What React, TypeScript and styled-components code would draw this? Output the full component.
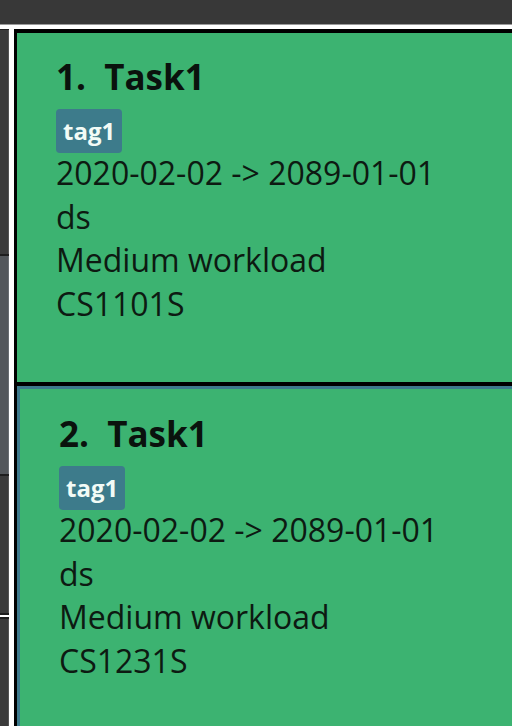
import React from "react";
import styled, { createGlobalStyle } from "styled-components";

const Global = createGlobalStyle`
  html, body { margin: 0; padding: 0; background: #ffffff; }
  body { font-family: "Open Sans", "Noto Sans", sans-serif; }
`;

const Page = styled.div`
  width: 512px;
  height: 726px;
  overflow: hidden;
  display: flex;
  flex-direction: column;
  background: #ffffff;
`;

const TopBar = styled.div`
  height: 24px;
  flex: none;
  background: #383838;
  border-bottom: 1px solid #9a9a9a;
`;

const Spacer = styled.div`
  height: 4px;
  flex: none;
  background: #ffffff;
`;

const Main = styled.div`
  flex: 1;
  display: flex;
  min-height: 0;
`;

const SideList = styled.div`
  width: 9px;
  flex: none;
  display: flex;
  flex-direction: column;
  background: #1e1e1e;
  gap: 2px;
  padding-top: 1px;
`;

const SideCell = styled.div<{ $h: number; $light?: boolean }>`
  height: ${(p) => p.$h}px;
  flex: none;
  box-sizing: border-box;
  background: ${(p) => (p.$light ? "#53575b" : "#3b3b3b")};
  border-right: 1px solid ${(p) => (p.$light ? "#6a6e72" : "#555555")};
`;

const SideBreak = styled.div`
  height: 2px;
  flex: none;
  background: #ffffff;
`;

const Divider = styled.div`
  width: 5px;
  flex: none;
  background: #ffffff;
`;

const TaskList = styled.div`
  flex: 1;
  display: flex;
  flex-direction: column;
  border-left: 3px solid #000000;
  background: #3cb371;
`;

const Card = styled.div<{ $selected?: boolean }>`
  flex: none;
  height: ${(p) => (p.$selected ? 400 : 353)}px;
  box-sizing: border-box;
  border-top: 4px solid #000000;
  background: #3cb371;
  ${(p) => (p.$selected ? "box-shadow: inset 3px 3px 0 #3d7a8c;" : "")}
  padding: ${(p) => (p.$selected ? "28px 0 0 42px" : "24px 0 0 39px")};
  display: flex;
  flex-direction: column;
  align-items: flex-start;
  color: #0d1a12;
`;

const Title = styled.div`
  font-family: "Open Sans", "Noto Sans", sans-serif;
  font-weight: 700;
  font-size: 35px;
  line-height: 40px;
  color: #0a120d;
  white-space: pre;
`;

const Tag = styled.span`
  margin-top: 12px;
  margin-bottom: -2px;
  background: #3d7b8b;
  color: #f2fbf6;
  font-weight: 700;
  font-size: 24px;
  line-height: 44px;
  height: 44px;
  padding: 0 7px;
  border-radius: 4px;
`;

const Line = styled.div`
  font-size: 32px;
  line-height: 43.5px;
  color: #0d1a12;
  white-space: pre;
`;

type Task = { idx: number; name: string; tag: string; range: string; desc: string; workload: string; module: string };

const tasks: Task[] = [
  { idx: 1, name: "Task1", tag: "tag1", range: "2020-02-02 -> 2089-01-01", desc: "ds", workload: "Medium workload", module: "CS1101S" },
  { idx: 2, name: "Task1", tag: "tag1", range: "2020-02-02 -> 2089-01-01", desc: "ds", workload: "Medium workload", module: "CS1231S" },
];

export default function App() {
  return (
    <Page>
      <Global />
      <TopBar />
      <Spacer />
      <Main>
        <SideList>
          <SideCell $h={224} />
          <SideCell $h={218} $light />
          <SideCell $h={137} />
          <SideBreak />
          <SideCell $h={120} />
        </SideList>
        <Divider />
        <TaskList>
          {tasks.map((t) => (
            <Card key={t.idx} $selected={t.idx === 2}>
              <Title>{`${t.idx}.  ${t.name}`}</Title>
              <Tag>{t.tag}</Tag>
              <Line>{t.range}</Line>
              <Line>{t.desc}</Line>
              <Line>{t.workload}</Line>
              <Line>{t.module}</Line>
            </Card>
          ))}
        </TaskList>
      </Main>
    </Page>
  );
}
